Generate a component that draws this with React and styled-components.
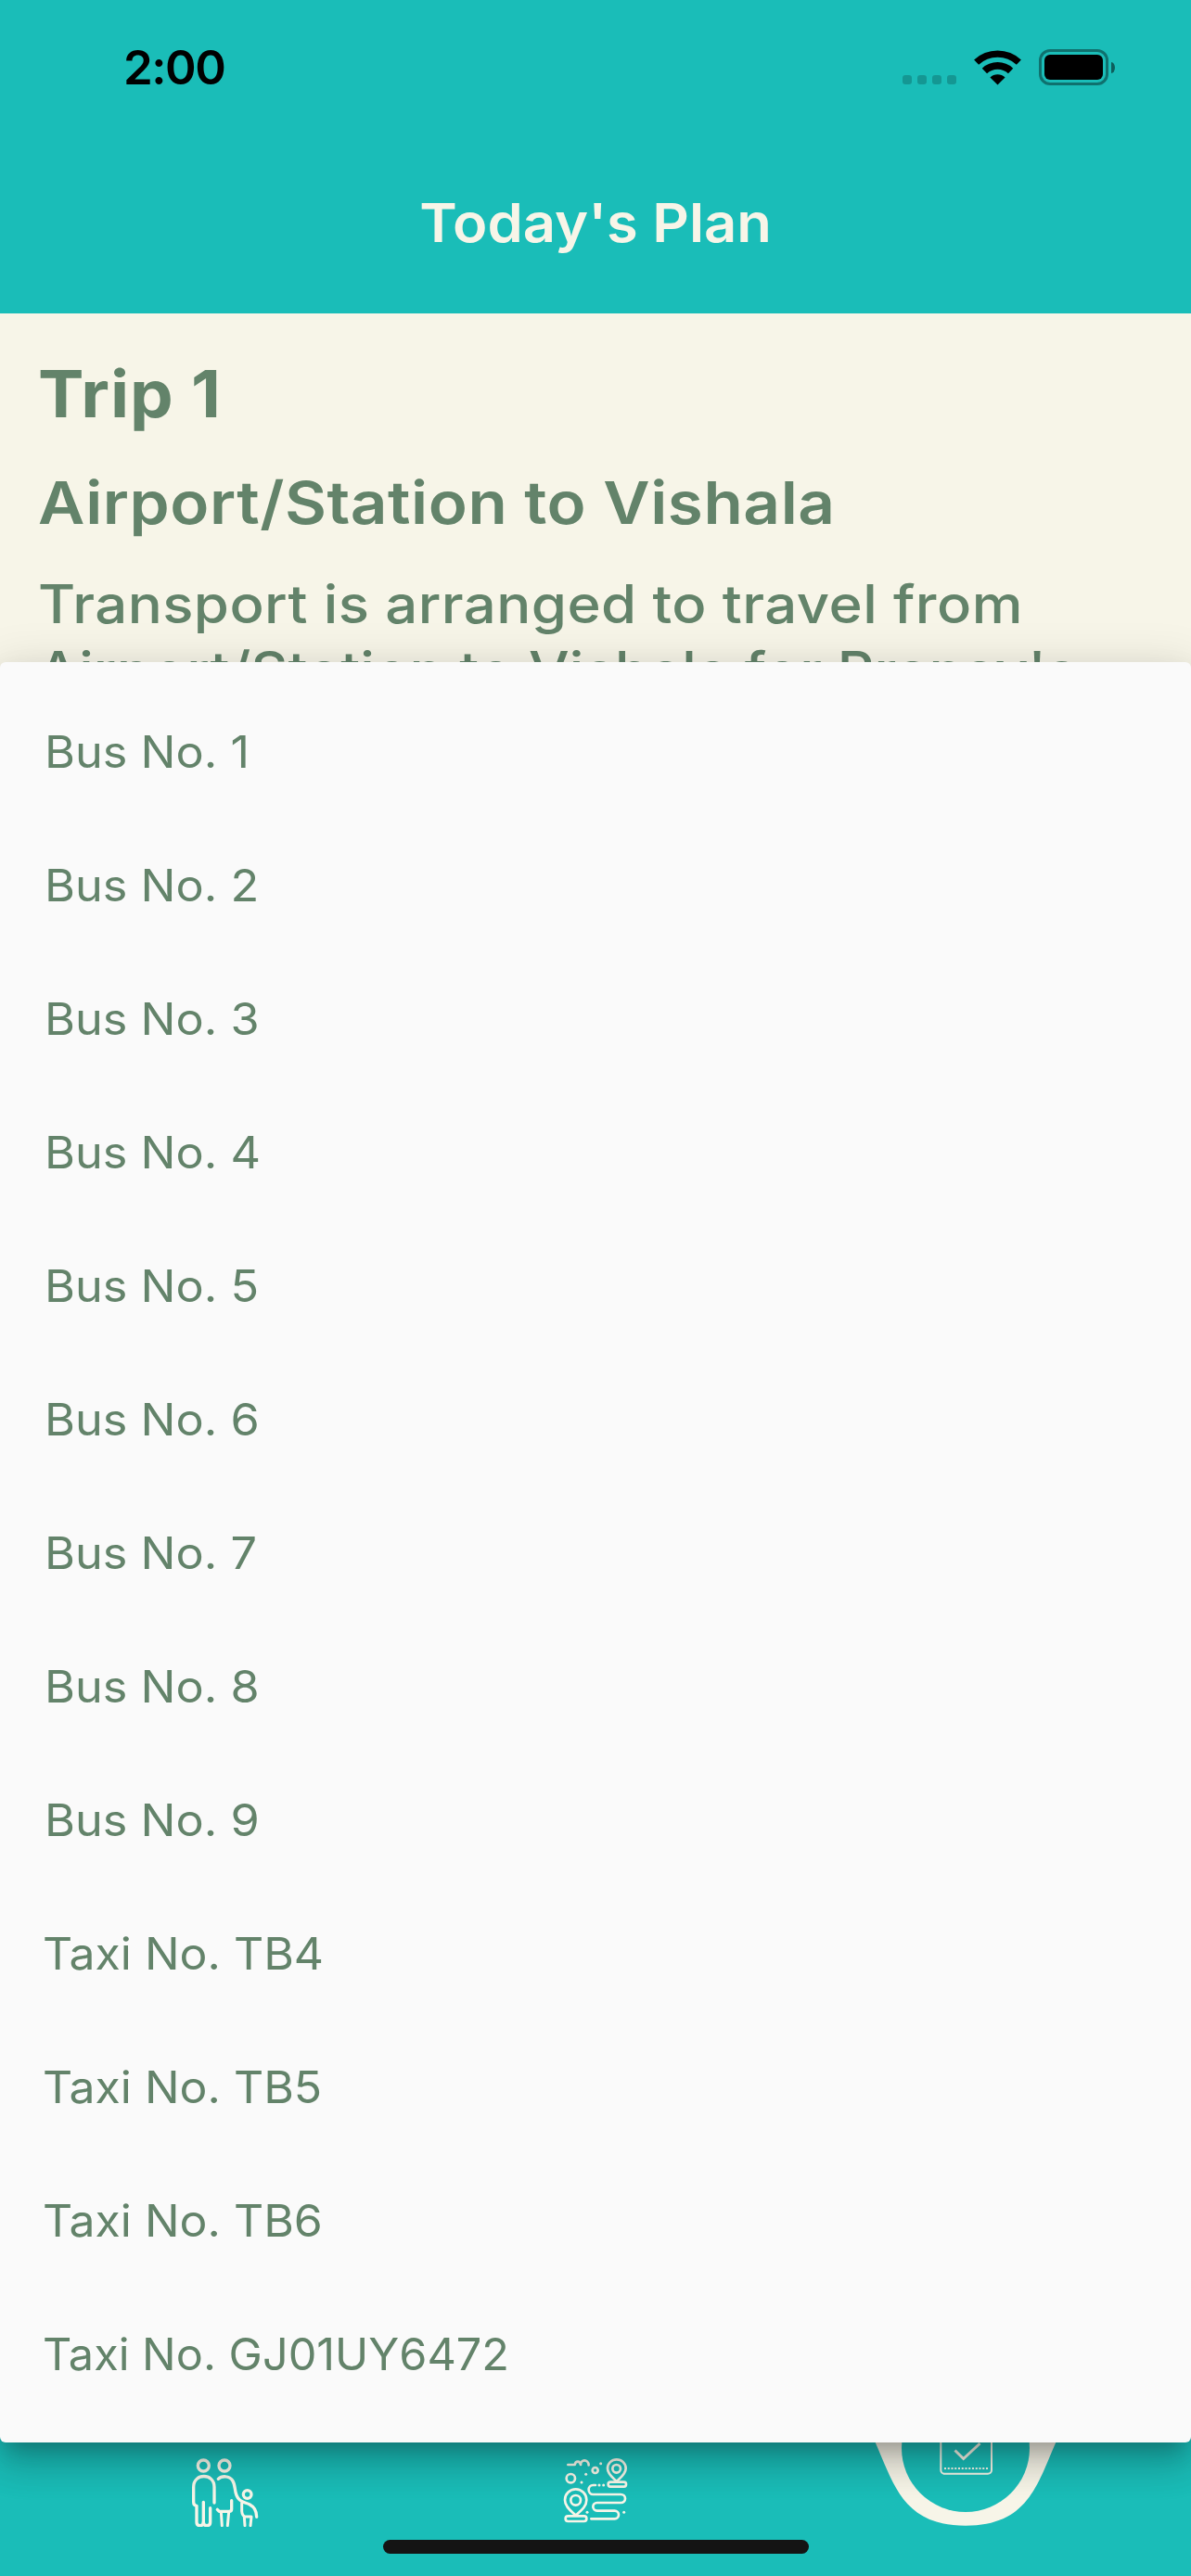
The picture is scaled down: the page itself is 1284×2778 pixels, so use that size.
import React from "react";
import styled, { createGlobalStyle } from "styled-components";

const teal = "#1abdb8";
const cream = "#f7f5e8";
const green = "#63836a";

const GlobalStyle = createGlobalStyle`
  body {
    margin: 0;
    background: ${cream};
  }
  *, *::before, *::after {
    box-sizing: border-box;
  }
`;

const Screen = styled.div`
  position: relative;
  display: flex;
  flex-direction: column;
  width: 1284px;
  height: 2778px;
  overflow: hidden;
  background: ${cream};
  color: ${green};
  font-family: Inter, "Open Sans", sans-serif;
  font-kerning: normal;
`;

const Header = styled.header`
  flex: none;
  height: 338px;
  background: ${teal};
`;

const StatusBar = styled.div`
  display: flex;
  align-items: center;
  justify-content: space-between;
  height: 141px;
  padding: 4px 82px 0 133px;
  color: #000;
`;

const Clock = styled.span`
  font-size: 51px;
  font-weight: 600;
  letter-spacing: -1.5px;
`;

const StatusIcons = styled.div`
  display: flex;
  align-items: center;
  gap: 19px;
`;

const SignalDots = styled.div`
  display: flex;
  gap: 6px;
  margin-top: 27px;
`;

const SignalDot = styled.i`
  width: 10px;
  height: 10px;
  border-radius: 3px;
  background: rgba(0, 0, 0, 0.2);
`;

const Battery = styled.div`
  display: flex;
  align-items: center;
  gap: 3px;
`;

const BatteryCase = styled.div`
  width: 75px;
  height: 39px;
  padding: 3px;
  border: 3px solid rgba(0, 0, 0, 0.4);
  border-radius: 12px;
`;

const BatteryCharge = styled.div`
  height: 100%;
  border-radius: 6px;
  background: #000;
`;

const BatteryCap = styled.div`
  width: 4px;
  height: 12px;
  border-radius: 0 4px 4px 0 / 0 6px 6px 0;
  background: rgba(0, 0, 0, 0.5);
`;

const AppBar = styled.div`
  display: flex;
  align-items: center;
  justify-content: center;
  height: 197px;
`;

const Title = styled.h1`
  margin: 0;
  color: ${cream};
  font-size: 58px;
  font-weight: 600;
  transform: scaleX(1.06);
`;

const Plan = styled.main`
  flex: 1;
  min-height: 0;
  overflow: hidden;
  padding: 43px 40px 0;
`;

/* Widened lettering: horizontal scale plus a little tracking. */
const Wide = styled.span`
  display: block;
  white-space: nowrap;
  letter-spacing: ${(p) => p.$spacing || 0}px;
  transform: scaleX(${(p) => p.$scale || 1.06});
  transform-origin: left center;
`;

const TripName = styled.h2`
  margin: 0 0 33px;
  padding-left: 1px;
  font-size: 70px;
  font-weight: 700;
  line-height: 88px;
`;

const TripRoute = styled.h3`
  margin: 0 0 34px;
  padding-left: 1px;
  font-size: 63.5px;
  font-weight: 600;
  line-height: 80px;
`;

const TripText = styled.p`
  margin: 0;
  padding-left: 1px;
  font-size: 57px;
  font-weight: 500;
  line-height: 72px;
`;

const BottomNav = styled.nav`
  flex: none;
  display: flex;
  height: 225px;
  padding: 0 43px;
  background: ${teal};
`;

const Tab = styled.div`
  flex: 1;
  display: flex;
  justify-content: center;
  align-items: flex-start;
  padding-top: ${(p) => (p.$active ? 0 : 98)}px;

  svg {
    flex: none;
    display: block;
  }
`;

const Menu = styled.ul`
  position: absolute;
  top: 714px;
  left: 0;
  width: 100%;
  height: 1920px;
  margin: 0;
  padding: 24px 0;
  list-style: none;
  background: #fafafa;
  border-radius: 6px;
  box-shadow:
    0 15px 20px -9px rgba(0, 0, 0, 0.2),
    0 24px 38px 3px rgba(0, 0, 0, 0.14),
    0 9px 51px 6px rgba(0, 0, 0, 0.12);
`;

const MenuItem = styled.li`
  display: flex;
  align-items: center;
  height: 144px;
  padding: 0 ${(p) => (p.$taxi ? 46 : 48)}px;
  font-size: 48px;
  font-weight: 400;
`;

const HomeIndicator = styled.div`
  position: absolute;
  bottom: 24px;
  left: 413px;
  width: 459px;
  height: 15px;
  border-radius: 8px;
  background: #141414;
`;

const WifiIcon = () => (
  <svg width="51" height="38" viewBox="270 41 152 113" fill="none" stroke="#000">
    <path d="M277.8 79.9A100 100 0 0 1 414.2 79.9" strokeWidth="22" />
    <path d="M304 108A61.5 61.5 0 0 1 388 108" strokeWidth="23" />
    <path d="M346 153L322 129A35 35 0 0 1 370 129Z" fill="#000" stroke="none" />
  </svg>
);

const FamilyIcon = () => (
  <svg
    width="72"
    height="74"
    viewBox="142 153 216 222"
    fill="none"
    stroke={cream}
    strokeWidth="10"
    strokeLinecap="round"
    strokeLinejoin="round"
  >
    <circle cx="179" cy="177" r="18" />
    <circle cx="247" cy="177" r="18" />
    <path d="M214 297V246C214 200 147 200 147 246V295Q147 306 157 307V360Q157 371 168 371Q179 371 179 360V295" />
    <path d="M179 360Q179 371 190 371Q201 371 201 360V314" />
    <path d="M227 220C238 209 263 209 273 225C285 243 277 263 291 282C302 297 316 296 329 303C344 311 351 325 351 343" />
    <path d="M270 290V317Q270 325 262 325H230L224 319" />
    <path d="M236 326L239 371M261 326L257 371" strokeWidth="9" />
    <circle cx="321" cy="270" r="13" />
    <path d="M303 298V324Q304 338 313 342H334L331 371M311 343L313 371" strokeWidth="9" />
  </svg>
);

const RouteIcon = () => (
  <svg
    width="70"
    height="70"
    viewBox="83 161 210 210"
    fill="none"
    stroke={cream}
    strokeWidth="8"
    strokeLinecap="round"
    strokeLinejoin="round"
  >
    <path d="M99 182H121C124 168 138 169 140 182C139 164 165 163 166 183" />
    <circle cx="108" cy="226" r="14" />
    <circle cx="187" cy="200" r="9" />
    <circle cx="256" cy="195" r="13" />
    <path d="M256 236C246 225 227 213 227 194A29.5 29 0 0 1 286 194C286 213 267 225 256 236Z" />
    <rect x="229" y="238" width="58" height="15" rx="7" />
    <circle cx="124" cy="297" r="16" />
    <path d="M124 346C111 333 89 319 89 296A35 35 0 0 1 159 296C159 319 138 333 124 346Z" />
    <rect x="91" y="348" width="68" height="17" rx="8" />
    <path d="M188 248H180A14 15 0 0 0 180 278H270A14 13.5 0 0 1 270 305H193A13 13 0 0 0 193 331H250A13 13 0 0 1 250 357H174" />
    <g fill={cream} stroke="none">
      <circle cx="205" cy="178" r="4.5" />
      <circle cx="157" cy="213" r="4.5" />
      <circle cx="143" cy="239" r="4.5" />
      <circle cx="200" cy="248" r="4.5" />
      <circle cx="214" cy="248" r="4.5" />
      <circle cx="161" cy="336" r="4.5" />
      <circle cx="280" cy="336" r="4.5" />
    </g>
  </svg>
);

const ActivePlanIcon = () => (
  <svg width="242" height="171" viewBox="0 0 242 171" fill="none" stroke={cream}>
    <path
      d="M0 0C10 35 15 61 23.7 81C44 127 54 170.7 121 170.7C188 170.7 198 127 218.3 81C227 61 232 35 242 0Z"
      fill={cream}
      stroke="none"
    />
    <circle cx="121" cy="87" r="69" fill={teal} stroke="none" />
    <rect x="94.3" y="58" width="54.7" height="56.7" rx="4" strokeWidth="2" />
    <path d="M109.5 89.5L118.7 98.5L136.5 82" strokeWidth="3" />
    <path d="M98 109H145.5" strokeWidth="2" strokeDasharray="2 1.75" />
  </svg>
);

const vehicles = [
  ...["1", "2", "3", "4", "5", "6", "7", "8", "9"].map((n) => ({ label: `Bus No. ${n}`, scale: 1.05 })),
  { label: "Taxi No. TB4", scale: 1.04, taxi: true },
  { label: "Taxi No. TB5", scale: 1.04, taxi: true },
  { label: "Taxi No. TB6", scale: 1.04, taxi: true },
  { label: "Taxi No. GJ01UY6472", scale: 1.013, taxi: true },
];

export default function App() {
  return (
    <Screen>
      <GlobalStyle />
      <Header>
        <StatusBar>
          <Clock>2:00</Clock>
          <StatusIcons>
            <SignalDots>
              {[0, 1, 2, 3].map((i) => (
                <SignalDot key={i} />
              ))}
            </SignalDots>
            <WifiIcon />
            <Battery>
              <BatteryCase>
                <BatteryCharge />
              </BatteryCase>
              <BatteryCap />
            </Battery>
          </StatusIcons>
        </StatusBar>
        <AppBar>
          <Title>Today's Plan</Title>
        </AppBar>
      </Header>
      <Plan>
        <TripName>
          <Wide $spacing={0.85}>Trip 1</Wide>
        </TripName>
        <TripRoute>
          <Wide $spacing={0.5} $scale={1.09}>Airport/Station to Vishala</Wide>
        </TripRoute>
        <TripText>
          <Wide $spacing={0.4} $scale={1.082}>Transport is arranged to travel from</Wide>
          <Wide $spacing={0.2} $scale={1.08}>Airport/Station to Vishala for Pranav's</Wide>
        </TripText>
      </Plan>
      <BottomNav>
        <Tab>
          <FamilyIcon />
        </Tab>
        <Tab>
          <RouteIcon />
        </Tab>
        <Tab $active>
          <ActivePlanIcon />
        </Tab>
      </BottomNav>
      <Menu>
        {vehicles.map((v) => (
          <MenuItem key={v.label} $taxi={v.taxi}>
            <Wide $scale={v.scale}>{v.label}</Wide>
          </MenuItem>
        ))}
      </Menu>
      <HomeIndicator />
    </Screen>
  );
}
